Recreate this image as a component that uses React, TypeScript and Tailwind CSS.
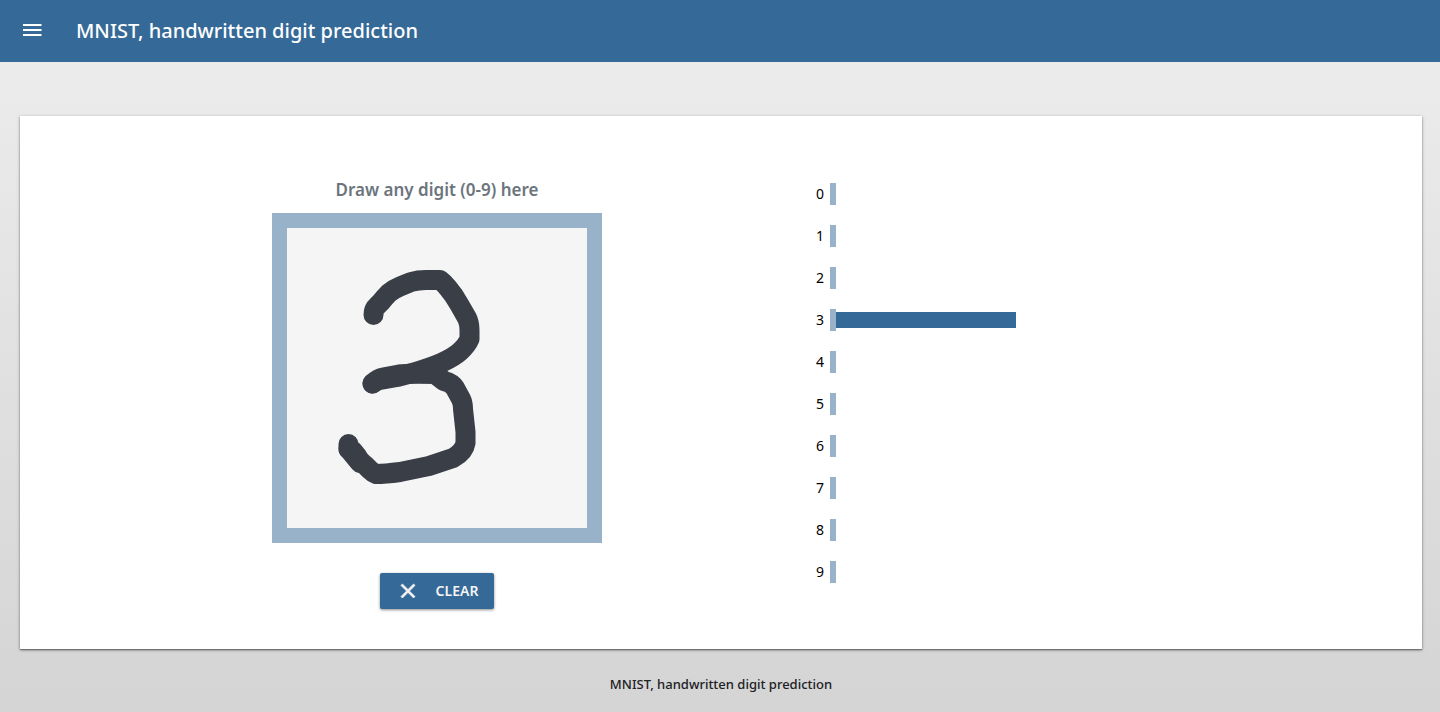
const probabilities = [0, 0, 0, 1, 0, 0, 0, 0, 0, 0];

function MenuIcon() {
  return (
    <svg viewBox="0 0 24 24" className="size-6 fill-current" aria-hidden="true">
      <path d="M3 17h18.5v-2H3v2zm0-5h18.5v-2H3v2zm0-7v2h18.5V5H3z" />
    </svg>
  );
}

function CloseIcon() {
  return (
    <svg
      viewBox="0 0 24 24"
      className="size-6 fill-current stroke-current"
      strokeWidth="0.8"
      aria-hidden="true"
    >
      <path d="M19 6.41L17.59 5 12 10.59 6.41 5 5 6.41 10.59 12 5 17.59 6.41 19 12 13.41 17.59 19 19 17.59 13.41 12z" />
    </svg>
  );
}

function DrawingPad() {
  return (
    <div className="border-[15px] border-[#98b3c9] bg-[#f5f5f5]">
      <svg
        viewBox="0 0 300 300"
        className="block size-[300px]"
        fill="none"
        stroke="#3a3e47"
        strokeWidth="20"
        strokeLinecap="round"
        strokeLinejoin="round"
        role="img"
        aria-label="Drawing area"
      >
        <path d="M86.5 87Q86.5 81 90 78L94 74Q98 69 102 65Q107 61 113 58.5L124 54Q131 52 139 52H153Q157 55 161 60Q167 67 172 76L180 90Q182.5 95 182.5 102V111Q180 117 173 123.5Q167 129 155 134.5Q145 139 125 145L110 149L96 151.5Q91 151.5 85.5 155.5" />
        <path d="M85.5 155.5Q91 150.5 96 149.5L112 146.5Q120 145.500 148 146L157 153Q165 155 168 160L174 171Q176 175 176 181L178.500 204V215Q177 224 166 230L142 238L113 244Q98 246 89 246Q86 245 83 242L78 237Q73 234 70 228L66 223L61.500 221V216" />
        <path d="M61.5 221L73 235" />
      </svg>
    </div>
  );
}

function Prediction({ digit, value }: { digit: number; value: number }) {
  return (
    <li className="flex h-[22px] items-center">
      <span className="w-2 text-right text-sm">{digit}</span>
      <span className="ml-1.5 h-full w-1.5 bg-[#98b3c9]" />
      <span className="w-[180px]">
        <span className="block h-4 bg-[#356997]" style={{ width: `${value * 100}%` }} />
      </span>
    </li>
  );
}

export default function App() {
  return (
    <div className="flex min-h-screen flex-col bg-linear-to-b from-[#eeeeee] to-[#d4d4d4] font-['Noto_Sans','Open_Sans',sans-serif] text-[#202124]">
      <header className="flex h-[62px] items-center gap-8 bg-[#356997] px-5 text-white">
        <button type="button" aria-label="Open menu" className="cursor-pointer">
          <MenuIcon />
        </button>
        <h1 className="text-[20px] font-medium">MNIST, handwritten digit prediction</h1>
      </header>

      <main className="mt-[54px] mr-[18px] ml-5 bg-white px-5 pt-[60px] pb-10 shadow-[0_1px_3px_rgba(0,0,0,0.4),0_1px_1px_rgba(0,0,0,0.3)]">
        <div className="mx-auto grid max-w-[1136px] grid-cols-1 md:grid-cols-2">
          <section className="flex flex-col items-center">
            <h2 className="mb-2.5 text-[17px] leading-[27px] font-semibold text-[#6c757d]">
              Draw any digit (0-9) here
            </h2>
            <DrawingPad />
            <button
              type="button"
              className="mt-[30px] flex h-9 cursor-pointer items-center gap-4 rounded-xs bg-[#356997] px-4 text-sm font-semibold text-[#f4f4f4] shadow-[0_1px_3px_rgba(0,0,0,0.45)]"
            >
              <CloseIcon />
              CLEAR
            </button>
          </section>

          <section className="flex justify-center pt-[7px]">
            <ul aria-label="Predictions" className="flex w-[378px] flex-col gap-5 text-black">
              {probabilities.map((value, digit) => (
                <Prediction key={digit} digit={digit} value={value} />
              ))}
            </ul>
          </section>
        </div>
      </main>

      <footer className="py-6 pl-0.5 text-center text-[13px] leading-[22px] font-medium">
        MNIST, handwritten digit prediction
      </footer>
    </div>
  );
}
